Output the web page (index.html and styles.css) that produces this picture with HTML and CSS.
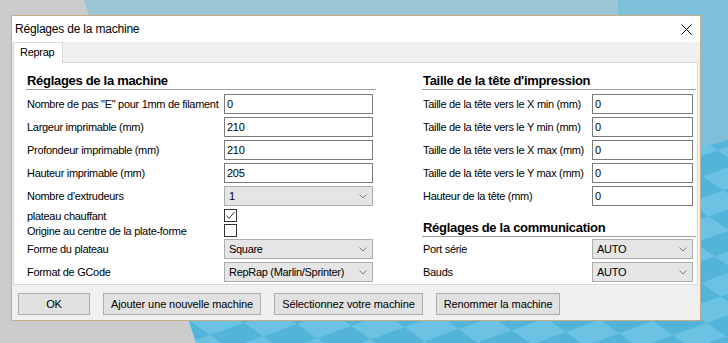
FILE: index.html
```html
<!DOCTYPE html>
<html lang="fr">
<head>
    <meta charset="UTF-8">
    <meta name="viewport" content="width=device-width, initial-scale=1.0">
    <title>Réglages de la machine</title>
    <link rel="stylesheet" href="styles.css">
</head>
<body>
    <div class="scene">
        <div class="scene-strip"></div>
        <div class="scene-floor"></div>
        <div class="scene-wall"></div>
    </div>

    <div class="dialog">
        <div class="titlebar">
            <span class="title">Réglages de la machine</span>
            <svg class="close" width="11" height="11" viewBox="0 0 11 11">
                <path d="M0.5 0.5 L10.5 10.5 M10.5 0.5 L0.5 10.5" stroke="#000" stroke-width="1" fill="none"/>
            </svg>
        </div>

        <div class="tabs">
            <div class="tab">Reprap</div>
        </div>

        <div class="panel">
            <div class="column left">
                <div class="heading">Réglages de la machine</div>
                <div class="row"><label>Nombre de pas "E" pour 1mm de filament</label><input class="field" value="0"></div>
                <div class="row"><label>Largeur imprimable (mm)</label><input class="field" value="210"></div>
                <div class="row"><label>Profondeur imprimable (mm)</label><input class="field" value="210"></div>
                <div class="row"><label>Hauteur imprimable (mm)</label><input class="field" value="205"></div>
                <div class="row">
                    <label>Nombre d'extrudeurs</label>
                    <div class="combo"><span>1</span>
                        <svg width="8" height="5" viewBox="0 0 8 5"><path d="M0.5 0.5 L4 4 L7.5 0.5" stroke="#7b7b7b" fill="none"/></svg>
                    </div>
                </div>
                <div class="row check-row">
                    <label>plateau chauffant</label>
                    <span class="check">
                        <svg width="11" height="11" viewBox="0 0 11 11"><path d="M1.5 5.5 L4 8.5 L9.5 2" stroke="#333" fill="none"/></svg>
                    </span>
                </div>
                <div class="row check-row"><label>Origine au centre de la plate-forme</label><span class="check"></span></div>
                <div class="row">
                    <label>Forme du plateau</label>
                    <div class="combo"><span>Square</span>
                        <svg width="8" height="5" viewBox="0 0 8 5"><path d="M0.5 0.5 L4 4 L7.5 0.5" stroke="#7b7b7b" fill="none"/></svg>
                    </div>
                </div>
                <div class="row">
                    <label>Format de GCode</label>
                    <div class="combo"><span>RepRap (Marlin/Sprinter)</span>
                        <svg width="8" height="5" viewBox="0 0 8 5"><path d="M0.5 0.5 L4 4 L7.5 0.5" stroke="#7b7b7b" fill="none"/></svg>
                    </div>
                </div>
            </div>

            <div class="column right">
                <div class="heading">Taille de la tête d'impression</div>
                <div class="row"><label>Taille de la tête vers le X min (mm)</label><input class="field" value="0"></div>
                <div class="row"><label>Taille de la tête vers le Y min (mm)</label><input class="field" value="0"></div>
                <div class="row"><label>Taille de la tête vers le X max (mm)</label><input class="field" value="0"></div>
                <div class="row"><label>Taille de la tête vers le Y max (mm)</label><input class="field" value="0"></div>
                <div class="row"><label>Hauteur de la tête (mm)</label><input class="field" value="0"></div>

                <div class="heading sub">Réglages de la communication</div>
                <div class="row">
                    <label>Port série</label>
                    <div class="combo"><span>AUTO</span>
                        <svg width="8" height="5" viewBox="0 0 8 5"><path d="M0.5 0.5 L4 4 L7.5 0.5" stroke="#7b7b7b" fill="none"/></svg>
                    </div>
                </div>
                <div class="row">
                    <label>Bauds</label>
                    <div class="combo"><span>AUTO</span>
                        <svg width="8" height="5" viewBox="0 0 8 5"><path d="M0.5 0.5 L4 4 L7.5 0.5" stroke="#7b7b7b" fill="none"/></svg>
                    </div>
                </div>
            </div>
        </div>

        <div class="actions">
            <button class="btn">OK</button>
            <button class="btn">Ajouter une nouvelle machine</button>
            <button class="btn">Sélectionnez votre machine</button>
            <button class="btn">Renommer la machine</button>
        </div>
    </div>
</body>
</html>
```

FILE: styles.css
```css
body {
    margin: 0;
    height: 343px;
    overflow: hidden;
    position: relative;
    font-family: "Liberation Sans", Arial, sans-serif;
    font-size: 11px;
    letter-spacing: -0.3px;
    color: #000;
    background-color: #9cc5d5;
}

/* décor du fond (scène 3D derrière la fenêtre) */
.scene-strip,
.scene-floor,
.scene-wall {
    position: absolute;
    top: 0;
    height: 343px;
}

.scene-strip {
    left: 618px;
    width: 110px;
    background-color: #7ebfd9;
}

.scene-floor {
    left: 0;
    width: 728px;
    overflow: hidden;
    clip-path: polygon(0 343px, 728px 140px, 728px 343px);
}

.scene-floor::before {
    content: "";
    position: absolute;
    left: -300px;
    top: -300px;
    width: 1400px;
    height: 1000px;
    background: repeating-conic-gradient(#52b4d9 0 25%, #6cc2e2 0 50%) 0 0 / 72px 72px;
    transform: rotate(-20deg) skewX(35deg) scaleY(0.55);
}

.scene-wall {
    left: 0;
    width: 220px;
    background-color: #cbcbcb;
    clip-path: polygon(0 0, 84px 0, 196px 343px, 0 343px);
}

.dialog {
    position: relative;
    margin: 15px 0 0 11px;
    width: 690px;
    height: 306px;
    box-sizing: border-box;
    border: 1px solid #c8aa84;
    background-color: #f0f0f0;
    display: flex;
    flex-direction: column;
}

.titlebar {
    height: 26px;
    flex: none;
    background-color: #fff;
    display: flex;
    align-items: center;
    justify-content: space-between;
    padding: 0 8px 0 3px;
}

.title {
    font-size: 12px;
    letter-spacing: -0.2px;
}

.tabs {
    height: 20px;
    flex: none;
    display: flex;
    align-items: flex-start;
    padding-left: 1px;
}

.tab {
    position: relative;
    width: 50px;
    height: 21px;
    box-sizing: border-box;
    padding-left: 6px;
    line-height: 19px;
    background-color: #fff;
    border: 1px solid #d9d9d9;
    border-bottom: none;
}

.panel {
    height: 223px;
    flex: none;
    box-sizing: border-box;
    margin: 0 2px 0 1px;
    padding-left: 12px;
    border: 1px solid #d9d9d9;
    background-color: #fff;
    display: flex;
    gap: 46px;
}

.column.left {
    width: 350px;
}

.column.right {
    width: 274px;
}

.heading {
    font-weight: bold;
    font-size: 13px;
    letter-spacing: -0.3px;
    line-height: 16px;
    padding: 10px 0 0 1px;
    border-bottom: 1px solid #a0a0a0;
    margin-bottom: 4px;
}

.heading.sub {
    padding-top: 11px;
    margin-bottom: 2px;
}

.row {
    display: flex;
    align-items: center;
    height: 20px;
    margin-bottom: 3px;
}

.row label {
    flex: none;
    width: 198px;
    padding-left: 1px;
    box-sizing: border-box;
    white-space: nowrap;
}

.right .row label {
    width: 170px;
}

.field {
    width: 149px;
    height: 20px;
    box-sizing: border-box;
    margin: 0;
    padding: 0 2px;
    border: 1px solid #7a7a7a;
    background-color: #fff;
    font: inherit;
    letter-spacing: inherit;
    color: #000;
    outline: none;
}

.right .field {
    width: 101px;
}

.combo {
    width: 149px;
    height: 20px;
    box-sizing: border-box;
    padding: 0 5px 0 4px;
    border: 1px solid #adadad;
    background-color: #e5e5e5;
    display: flex;
    align-items: center;
    justify-content: space-between;
}

.right .combo {
    width: 101px;
}

.check-row {
    height: 13px;
    margin-bottom: 2px;
}

.check {
    width: 13px;
    height: 13px;
    box-sizing: border-box;
    border: 1px solid #333;
    background-color: #fff;
    display: block;
}

.check svg {
    display: block;
}

.actions {
    display: flex;
    gap: 13px;
    padding: 8px 0 0 6px;
}

.btn {
    height: 22px;
    min-width: 72px;
    box-sizing: border-box;
    padding: 0 7px;
    border: 1px solid #adadad;
    background-color: #e1e1e1;
    font: inherit;
    letter-spacing: -0.1px;
    color: #000;
}
```
